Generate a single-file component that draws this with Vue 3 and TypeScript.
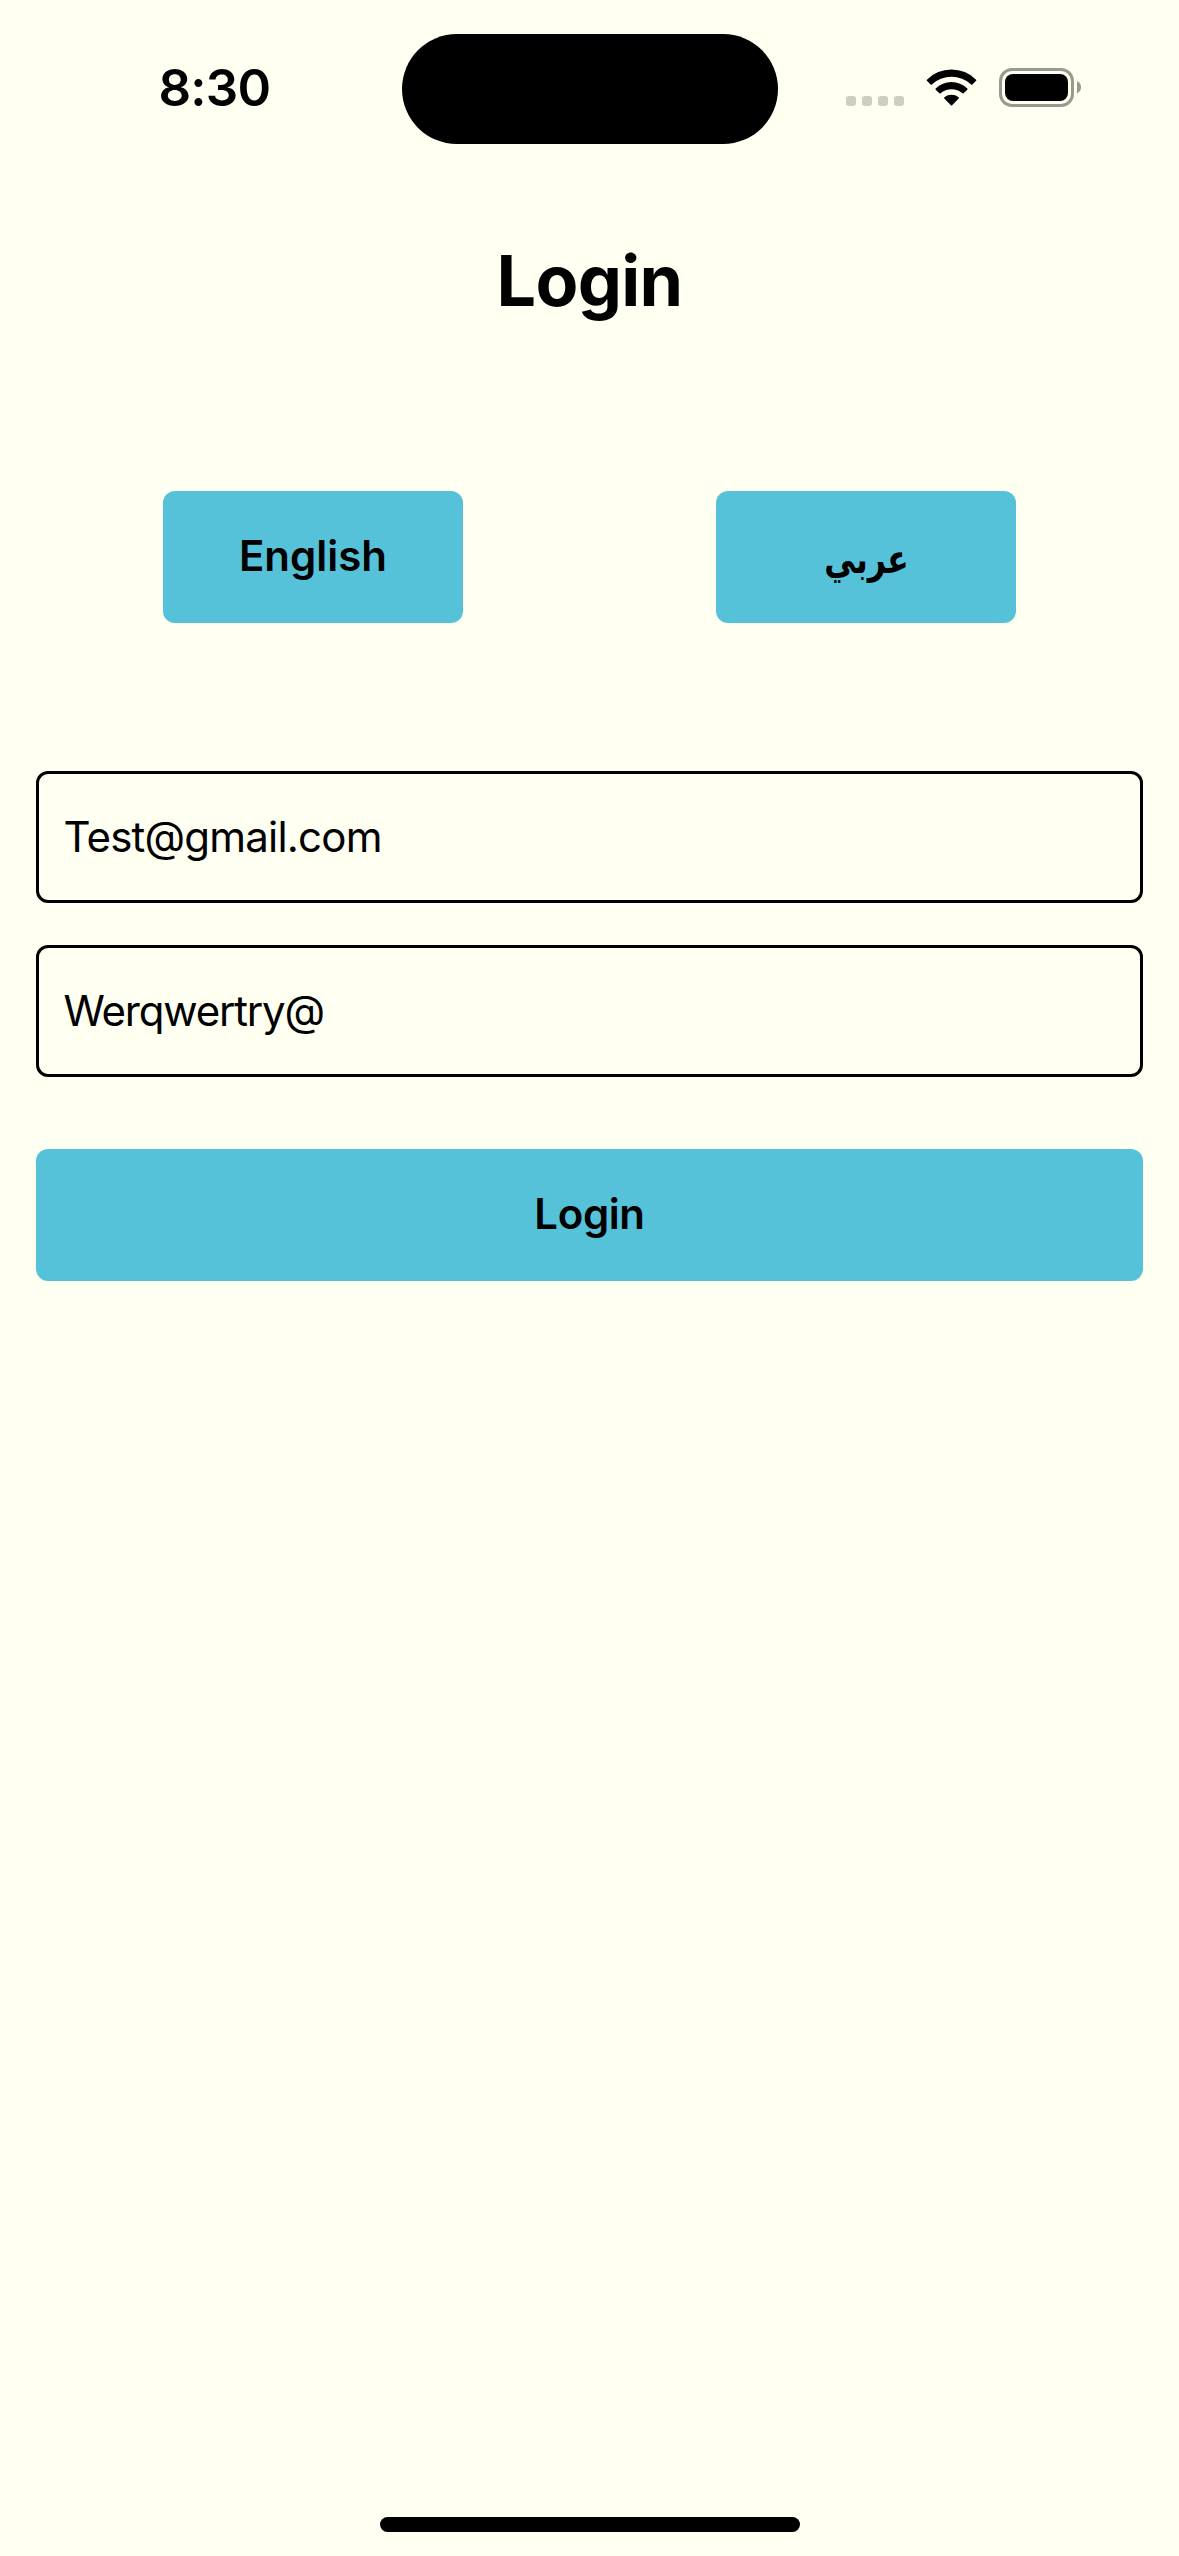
<script setup lang="ts">
import { ref } from 'vue'

const email = ref<string>('Test@gmail.com')
const password = ref<string>('Werqwertry@')
const signalDots: number[] = [0, 16, 32, 48]
</script>

<template>
  <main class="screen">
    <header class="status">
      <div class="clock"><span class="time">8:30</span></div>
      <div class="island"></div>
      <div class="indicators">
        <svg class="signal" width="58" height="10" viewBox="0 0 58 10">
          <rect v-for="x in signalDots" :key="x" :x="x" y="0" width="10" height="10" rx="3" />
        </svg>
        <svg class="wifi" width="51" height="38" viewBox="0 0 51 38">
          <path d="M.9 10.7A34.5 34.5 0 0 1 50.1 10.7Q50.6 11.3 50.1 11.8L46.4 15.4Q45.8 15.9 45.2 15.4A29.5 29.5 0 0 0 5.8 15.4Q5.2 15.9 4.6 15.4L.9 11.8Q.4 11.3 .9 10.7Z" />
          <path d="M9.7 19.5A22.6 22.6 0 0 1 41.3 19.5Q41.9 20.1 41.3 20.7L37.6 24.3Q37 24.8 36.4 24.3A17 17 0 0 0 14.6 24.3Q14 24.8 13.4 24.3L9.7 20.7Q9.1 20.1 9.7 19.5Z" />
          <path d="M18.4 28.2A11.4 11.4 0 0 1 32.6 28.2Q33.3 28.8 32.7 29.4L26.1 36.2Q25.5 36.8 24.9 36.2L18.3 29.4Q17.7 28.8 18.4 28.2Z" />
        </svg>
        <svg class="battery" width="82" height="39" viewBox="0 0 82 39">
          <rect x="1.5" y="1.5" width="72" height="36" rx="11.5" fill="none" stroke="#99998f" stroke-width="3" />
          <rect x="6" y="6" width="63" height="27" rx="8" />
          <path d="M78 13.2Q82 15 82 19.3T78 25.4Z" fill="#99998f" />
        </svg>
      </div>
    </header>

    <h1 class="title">Login</h1>

    <div class="languages">
      <button class="btn lang" type="button"><span class="english">English</span></button>
      <button class="btn lang" type="button"><span class="arabic" lang="ar" dir="rtl">عربي</span></button>
    </div>

    <form class="form" @submit.prevent>
      <input v-model="email" class="field email" type="text" spellcheck="false" />
      <input v-model="password" class="field password" type="text" spellcheck="false" />
      <button class="btn submit" type="submit"><span class="submit-label">Login</span></button>
    </form>

    <div class="home"></div>
  </main>
</template>

<style>
body {
  margin: 0;
  background: #fffff2;
}
</style>

<style scoped>
.screen {
  box-sizing: border-box;
  display: flex;
  flex-direction: column;
  width: 1179px;
  height: 2556px;
  padding-bottom: 24px;
  overflow: hidden;
  background: #fffff2;
  color: #000;
  font-family: Inter, "Liberation Sans", sans-serif;
}

.status {
  display: grid;
  grid-template-columns: 401.5px 376px 1fr;
  height: 177px;
}

.clock {
  padding: 57px 0 0 158.5px;
}

.time {
  display: block;
  font-size: 51px;
  font-weight: 560;
  line-height: 62px;
  letter-spacing: -0.8px;
}

.island {
  height: 110.5px;
  margin-top: 33.5px;
  border-radius: 56px;
  background: #000;
}

.indicators {
  display: flex;
  align-items: flex-start;
  padding-left: 68.5px;
}

.signal {
  margin-top: 96px;
  fill: #cdcdc2;
}

.wifi {
  margin: 69px 0 0 21.5px;
}

.battery {
  margin: 68px 0 0 22.5px;
}

.title {
  margin: 60px 0 0;
  font-size: 70px;
  font-weight: 700;
  line-height: 88px;
  letter-spacing: -0.7px;
  text-align: center;
}

.languages {
  display: flex;
  justify-content: space-between;
  padding: 0 163px;
  margin-top: 166px;
}

.btn {
  display: flex;
  align-items: center;
  justify-content: center;
  height: 132px;
  padding: 0 0 2px;
  border: 0;
  border-radius: 12px;
  background: #56c2da;
  color: #000;
  font: 570 42px/50px Inter, "Liberation Sans", sans-serif;
}

.lang {
  width: 300px;
}

.arabic {
  margin-top: 6px;
  font-family: "DejaVu Sans Condensed", "DejaVu Sans", sans-serif;
  font-size: 40px;
  font-weight: 700;
  transform: scaleX(0.87);
}

.form {
  display: flex;
  flex-direction: column;
  padding: 0 36px;
  margin-top: 148px;
}

.field {
  box-sizing: border-box;
  width: 100%;
  height: 132px;
  padding: 0 24.5px 2px;
  border: 3px solid #000;
  border-radius: 12px;
  outline: 0;
  background: transparent;
  color: #000;
  font: 400 42px/50px Inter, "Liberation Sans", sans-serif;
}

.email {
  letter-spacing: -0.8px;
}

.password {
  margin-top: 42px;
  letter-spacing: -1.2px;
}

.submit {
  margin-top: 72px;
}

.submit-label {
  letter-spacing: -0.4px;
}

.home {
  width: 420px;
  height: 15px;
  margin: auto auto 0;
  border-radius: 8px;
  background: #000;
}
</style>
